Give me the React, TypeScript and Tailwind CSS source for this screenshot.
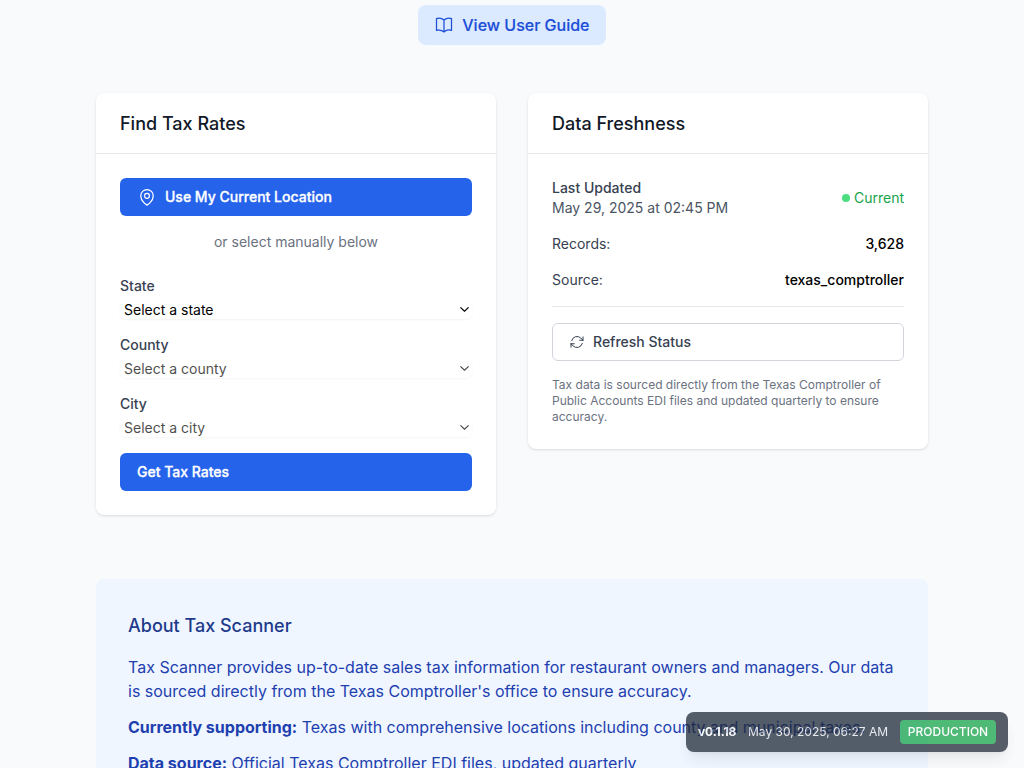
import type { ReactNode } from 'react';
import { HiOutlineArrowPath, HiOutlineBookOpen, HiOutlineMapPin } from 'react-icons/hi2';

function Card({ title, children }: { title: string; children: ReactNode }) {
  return (
    <section className="rounded-lg bg-white shadow-[0_1px_3px_0_rgba(0,0,0,0.1),0_1px_2px_-1px_rgba(0,0,0,0.1)]">
      <div className="border-b border-[#e5e7eb] px-6 pt-[17px] pb-[15px]">
        <h2 className="text-lg font-medium text-[#111827]">{title}</h2>
      </div>
      <div className="p-6">{children}</div>
    </section>
  );
}

function SelectField({ label, placeholder, disabled }: { label: string; placeholder: string; disabled?: boolean }) {
  return (
    <div>
      <label className="block text-sm font-medium text-[#374151]">{label}</label>
      <div
        className={
          disabled
            ? 'relative mt-1 rounded-md shadow-[0_1px_2px_0_rgba(0,0,0,0.05)] opacity-70'
            : 'relative mt-1 rounded-md shadow-[0_1px_2px_0_rgba(0,0,0,0.05)]'
        }
      >
        <select
          disabled={disabled}
          aria-label={label}
          className="block h-[19px] w-full appearance-none rounded-md bg-white px-1 text-sm leading-5 text-black opacity-100"
        >
          <option>{placeholder}</option>
        </select>
        <svg
          viewBox="0 0 9 5"
          className="pointer-events-none absolute top-[7px] right-[3px] h-[5px] w-[9px]"
          fill="none"
          stroke="black"
          strokeWidth="1.2"
        >
          <path d="M0.4 0.4 L4.5 4.2 L8.6 0.4" />
        </svg>
      </div>
    </div>
  );
}

function DataRow({ label, value }: { label: string; value: string }) {
  return (
    <div className="flex items-center justify-between text-sm">
      <span className="text-[#374151]">{label}</span>
      <span className="font-medium text-black">{value}</span>
    </div>
  );
}

export default function App() {
  return (
    <div className="h-screen overflow-hidden bg-[#f9fafb] font-['Inter',sans-serif] text-black antialiased">
      <main className="mx-auto w-[832px] pt-[5px]">
        <div className="flex justify-center">
          <a className="inline-flex w-[187.5px] items-center rounded-lg bg-[#dbeafe] px-4 py-2 font-medium whitespace-nowrap text-[#1d4ed8] [-webkit-text-stroke:0.15px_#1d4ed8]">
            <HiOutlineBookOpen className="mr-2 size-5 shrink-0" />
            View User Guide
          </a>
        </div>

        <div className="mt-12 grid grid-cols-2 items-start gap-8">
          <Card title="Find Tax Rates">
            <button className="flex w-full items-center rounded-md border border-transparent bg-[#2563eb] px-4 py-2 text-sm font-medium text-white">
              <HiOutlineMapPin className="mr-2 size-5" />
              <span className="[-webkit-text-stroke:0.3px_white]">Use My Current Location</span>
            </button>
            <p className="mt-4 text-center text-sm text-[#6b7280]">or select manually below</p>
            <form className="mt-6 space-y-4">
              <SelectField label="State" placeholder="Select a state" />
              <SelectField label="County" placeholder="Select a county" disabled />
              <SelectField label="City" placeholder="Select a city" disabled />
              <button
                type="button"
                className="flex w-full items-center rounded-md border border-transparent bg-[#2563eb] px-4 py-2 text-sm font-medium text-white [-webkit-text-stroke:0.3px_white]"
              >
                Get Tax Rates
              </button>
            </form>
          </Card>

          <Card title="Data Freshness">
            <div className="space-y-4">
              <div className="flex items-center justify-between text-sm">
                <div>
                  <p className="font-medium text-[#374151]">Last Updated</p>
                  <p className="text-[#4b5563]">May 29, 2025 at 02:45 PM</p>
                </div>
                <div className="flex items-center gap-1 text-[#16a34a]">
                  <span className="size-2 rounded-full bg-[#4ade80]" />
                  Current
                </div>
              </div>
              <DataRow label="Records:" value="3,628" />
              <DataRow label="Source:" value="texas_comptroller" />
              <div className="border-t border-[#e5e7eb] pt-4">
                <button className="flex w-full items-center rounded-md border border-[#d1d5db] bg-white px-4 py-2 text-sm font-medium text-[#374151]">
                  <HiOutlineArrowPath className="mr-2 size-4" />
                  Refresh Status
                </button>
              </div>
              <p className="text-xs text-[#6b7280]">
                Tax data is sourced directly from the Texas Comptroller of Public Accounts EDI files and updated
                quarterly to ensure accuracy.
              </p>
            </div>
          </Card>
        </div>

        <section className="mt-16 rounded-lg bg-[#eff6ff] px-8 pt-[33px] pb-8">
          <h2 className="mb-[15px] text-lg font-medium text-[#1e3a8a]">About Tax Scanner</h2>
          <div className="space-y-3 text-[#1e40af]">
            <p>
              Tax Scanner provides up-to-date sales tax information for restaurant owners and managers. Our data is
              sourced directly from the Texas Comptroller's office to ensure accuracy.
            </p>
            <p>
              <strong>Currently supporting:</strong> Texas with comprehensive locations including county and municipal
              taxes.
            </p>
            <p>
              <strong>Data source:</strong> Official Texas Comptroller EDI files, updated quarterly
            </p>
          </div>
        </section>
      </main>

      <div className="fixed right-4 bottom-4 flex w-[322px] items-center rounded-lg bg-[#1f2937] px-3 py-2 text-xs whitespace-nowrap text-white opacity-75 shadow-lg">
        <span className="w-[50px] font-bold tracking-[-0.1px]">v0.1.18</span>
        <span className="text-[#e5e7eb]">May 30, 2025, 06:27 AM</span>
        <span className="ml-auto w-24 rounded bg-[#16a34a] py-1 text-center font-medium">PRODUCTION</span>
      </div>
    </div>
  );
}
